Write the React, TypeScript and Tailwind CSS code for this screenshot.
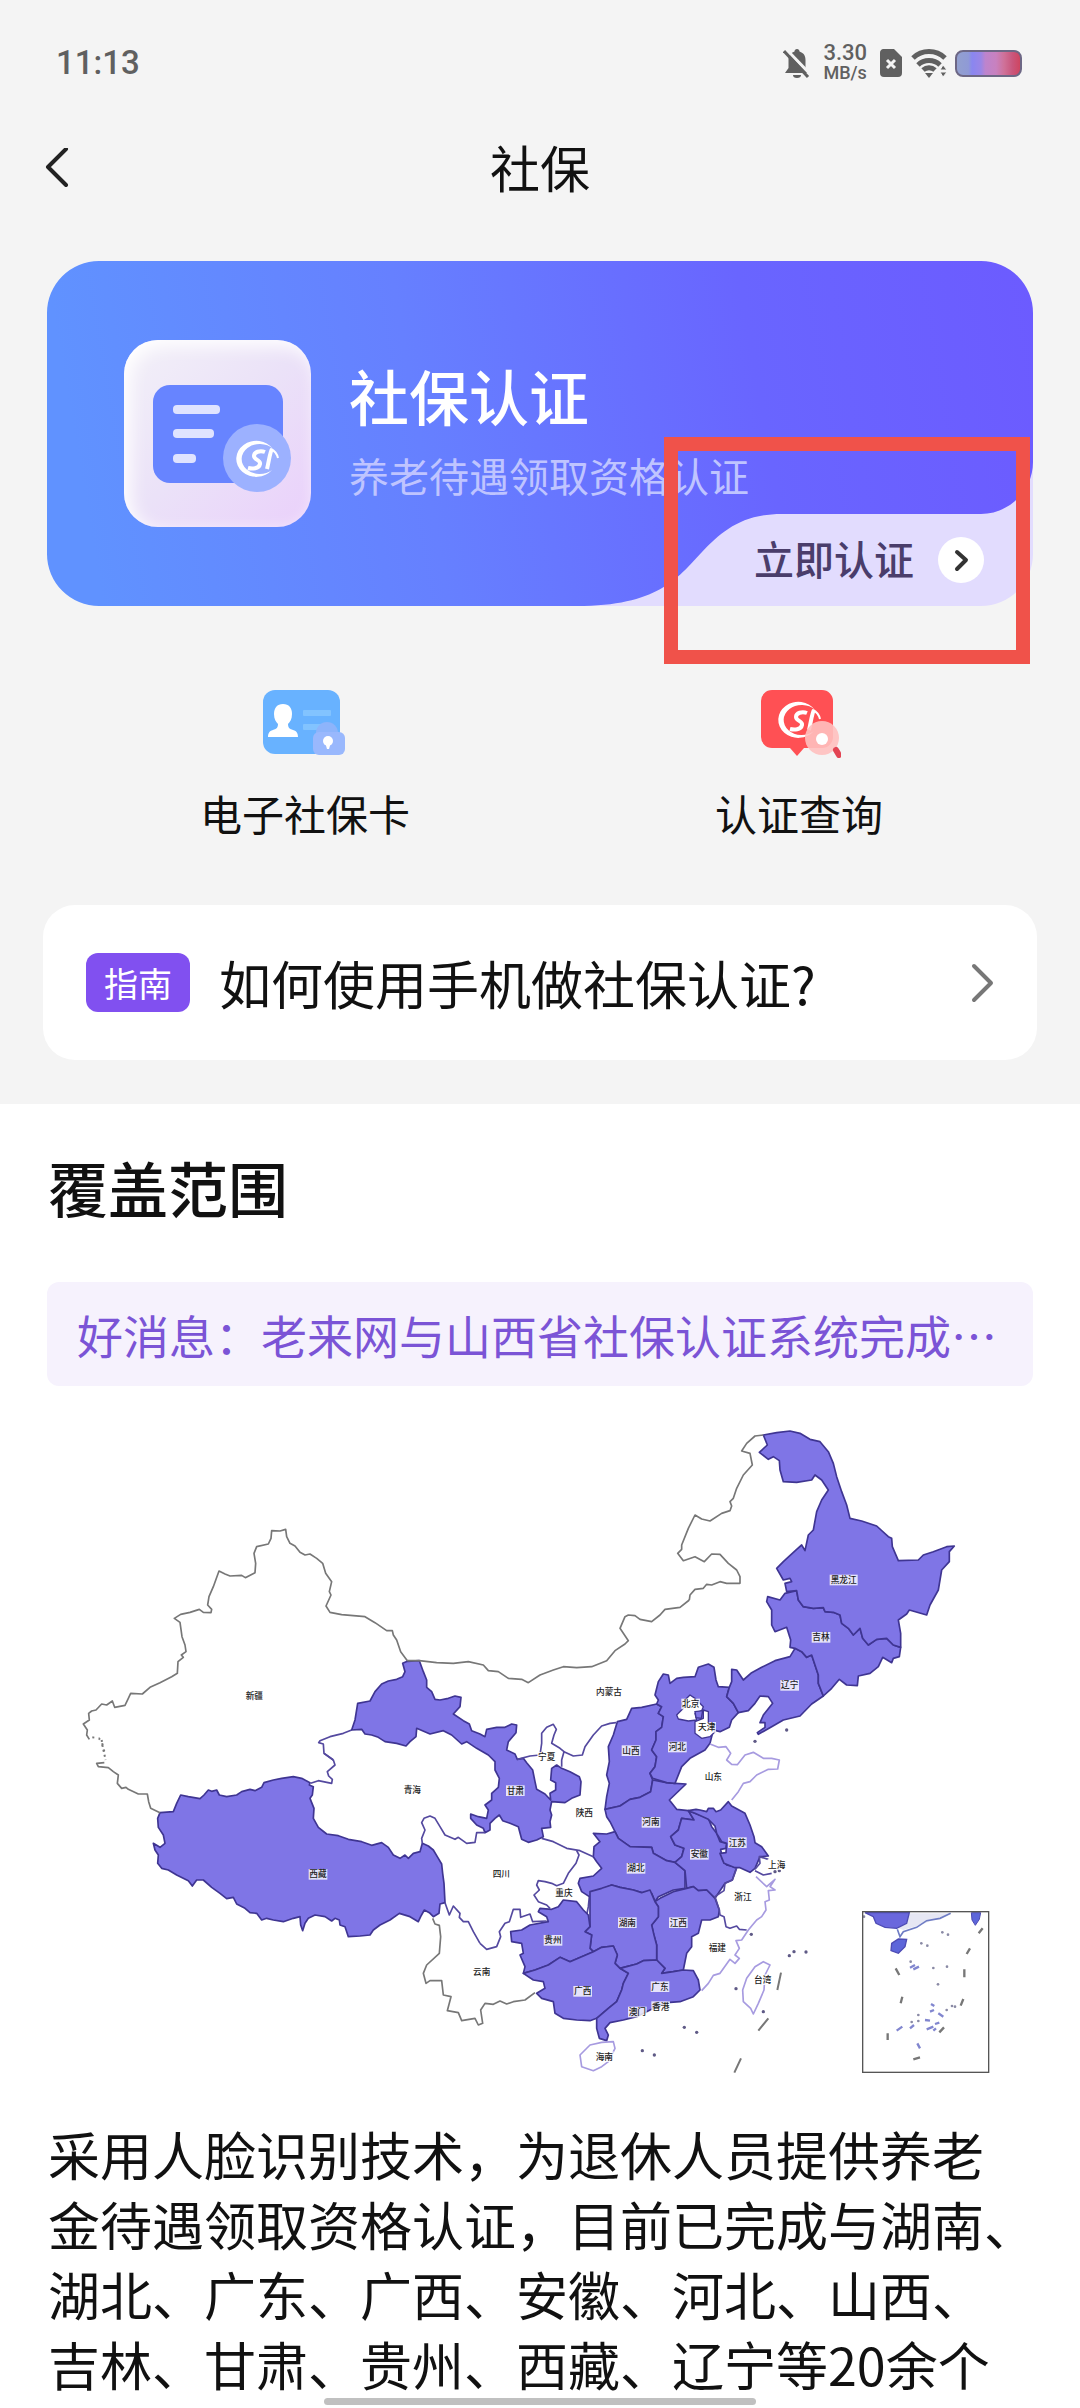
const PURPLE = "#7f75e6";
const BORDER = "#3f3592";
const COAST = "#a79be0";

// map units: 3 per pixel, each tile has its own origin
const tiles: { at: string; fills?: string[]; holes?: string[]; borders?: string[]; outer?: string[]; coast?: string[] }[] = [
  {
    at: "translate(0 0)",
    borders: ["M875,930 L850,940 810,950 780,962 776,968 790,972 792,1000 820,1020"],
    outer: [
      "M88,958 L80,945 82,930 70,912 88,900 86,880 95,873 108,870 125,852 140,855 157,843 164,862 195,856 205,835 212,820 247,822 270,802 300,788 335,770 352,760 354,725 370,712 364,705 378,695 375,675 366,650 360,607 343,595 362,583 390,577 418,568 430,577 453,578 455,568 443,555 447,530 460,500 477,453 495,462 510,468 545,466 556,473 585,458 587,430 582,400 590,380 625,372 633,355 635,332 660,333 677,328 680,350 690,370 705,378 720,397 735,405 750,402 770,415 788,430 797,460 815,485 808,515 813,525 798,558 810,577 845,584 915,590 945,608 980,632 997,632 1000,645 1010,660 1022,695 1042,722",
    ],
  },
  {
    at: "translate(0 960)",
    fills: [
      "M300,218 L340,215 350,190 362,165 385,170 420,176 432,165 445,150 455,154 470,150 478,165 500,170 530,165 545,155 570,148 585,152 605,142 612,128 640,120 665,115 700,110 725,115 750,128 748,135 760,140 757,165 750,175 762,205 760,235 775,262 800,282 835,287 865,298 905,305 935,316 965,308 985,322 1000,345 1020,355 1035,345 1045,355 1060,340 1080,335 1087,310 1105,318 1120,330 1135,355 1145,372 1148,400 1152,430 1155,488 1140,492 1137,520 1120,530 1108,518 1093,510 1082,530 1075,545 1050,530 1018,520 990,540 960,555 940,570 930,585 900,588 865,590 855,560 840,555 838,540 825,535 815,543 795,530 765,525 745,535 735,550 728,572 722,555 720,530 700,535 670,545 640,540 620,535 605,540 590,520 570,518 555,505 530,492 520,472 500,476 480,460 455,442 430,420 410,420 397,438 385,422 350,405 325,390 305,385 293,370 295,345 285,330 280,310 300,322 315,310 310,285 295,262 293,235 Z",
    ],
    borders: [
      "M820,60 L825,75 802,95 806,108 817,118 815,130 775,122 752,130",
      "M792,40 L795,42 820,60",
      "M1155,488 L1168,525 1180,498 1200,520 1198,532 1210,545 1225,545 1240,575 1260,610",
    ],
    outer: [
      "M133,68 L110,70 115,80 145,83 160,95 175,105 172,130 185,145 198,142 205,148 235,162 262,162 266,185 272,205 300,218",
      "M1118,535 L1125,552 1138,556 1142,590 1138,640 1100,675 1090,700 1098,730 1110,722 1145,722 1150,765 1173,770 1162,812 1195,818 1205,842 1245,835 1255,855 1268,850 1262,810 1275,790 1300,793 1320,783 1340,792 1360,785 1395,780 1425,758",
    ],
  },
  {
    at: "translate(960 540)",
    fills: [
      "M-85,390 L-75,360 -67,310 -30,303 -15,275 5,252 25,243 50,238 68,230 75,215 68,190 82,184 118,182 130,215 140,240 140,262 155,275 165,298 180,300 205,295 225,288 243,292 240,320 220,342 250,362 268,372 275,392 300,402 315,410 320,388 350,382 375,382 395,372 410,375 408,398 385,425 380,450 405,462 412,478 430,475 440,488 458,510 465,545 470,568 495,582 512,600 510,580 527,570 527,548 512,540 515,505 530,495 545,505 570,515 598,530 603,545 600,585 575,595 555,608 515,605 510,630 515,645 510,665 512,682 485,685 490,710 470,720 445,727 425,718 415,680 390,670 368,662 358,645 345,655 330,670 330,690 315,698 310,685 290,675 272,655 272,642 295,650 320,655 325,630 315,615 335,600 335,580 355,562 358,535 345,510 345,485 325,465 290,445 260,425 245,432 215,405 190,392 150,402 110,385 108,410 90,425 78,438 50,430 15,425 -5,412 -25,405 -45,402 -55,388 Z",
      "M675,628 L680,590 688,550 680,525 688,485 685,440 700,405 712,365 740,358 755,325 785,322 830,312 845,320 835,340 850,350 845,382 828,395 828,420 815,450 830,470 825,500 810,520 818,540 812,575 780,592 750,598 720,618 Z",
      "M675,628 L720,618 750,598 780,592 812,575 818,540 860,548 885,550 918,552 868,600 890,628 925,632 942,660 905,655 895,690 872,710 885,735 912,745 905,770 885,787 860,782 820,760 815,742 750,740 715,715 705,695 690,665 680,650 Z",
      "M705,695 L715,715 750,740 815,742 820,760 860,782 885,787 915,812 915,865 880,870 835,890 825,905 815,880 785,878 760,870 720,862 695,855 665,868 650,885 628,890 605,875 595,850 600,835 640,828 665,805 650,785 640,770 642,740 660,725 640,700 680,702 Z",
    ],
    borders: [
      "M127,730 L125,715 135,690 125,668 132,655 150,648 165,655 180,680 195,705 225,718 235,712 260,730 285,727 290,698 315,698",
      "M412,478 L450,468 480,465 485,430 485,400 500,382 520,373 529,388 522,405 515,430 540,445 552,455 545,480 545,500",
      "M552,455 L580,468 607,465 615,440 640,405 665,378 690,370 708,368",
      "M485,715 L520,725 560,745 600,752 640,770",
      "M590,752 L597,765 588,790 565,820 550,850 530,857 515,850 495,845 475,842 470,855 478,870 462,885 475,905 500,915 510,925",
      "M628,890 L625,920 620,945",
    ],
    outer: [
      "M82,182 L118,182 170,188 220,190 265,185 310,195 325,212 355,215 385,235 425,238 445,248 480,225 520,210 550,200 590,203 635,200 680,182 705,152 735,132 745,122 720,85 735,50 745,45 765,47 780,58 815,65 840,45 855,28 900,22 928,0",
    ],
  },
  {
    at: "translate(1740 0)",
    fills: [
      "M50,852 L55,840 45,825 55,785 70,762 85,765 90,790 110,775 130,772 165,770 175,742 205,732 222,742 228,780 235,800 268,802 260,830 280,850 295,878 275,900 268,922 240,935 220,930 210,970 195,990 150,1015 125,1040 105,1090 80,1088 38,1075 30,1060 45,1040 50,1010 35,990 48,960 48,935 65,922 70,890 55,880 65,860 Z",
      "M268,802 L275,785 275,748 290,750 310,780 335,758 365,742 405,722 450,710 465,685 485,695 500,712 515,705 525,735 535,765 535,790 550,828 515,852 480,888 430,900 395,920 355,943 352,938 375,922 375,908 360,908 370,885 398,850 385,830 360,828 345,850 325,872 295,878 280,850 260,830 Z",
      "M465,685 L450,682 452,660 440,622 405,635 395,615 395,570 380,545 383,530 420,540 435,520 470,512 475,540 490,560 520,565 550,563 555,575 580,577 600,585 605,610 625,625 640,645 660,625 668,655 685,675 710,658 740,655 760,675 782,682 778,710 760,715 755,728 728,712 715,740 690,760 655,768 652,797 620,795 598,778 575,805 550,828 535,790 535,765 525,735 515,705 500,712 485,695 Z",
      "M370,45 L410,38 450,33 480,40 510,58 540,65 565,95 580,130 590,170 605,215 620,255 630,295 665,303 710,318 745,350 755,355 757,380 775,422 835,420 850,405 880,395 920,380 943,378 928,395 928,425 905,450 895,510 870,555 860,585 808,570 800,582 775,600 782,640 782,682 760,675 740,655 710,658 685,675 668,655 660,625 640,645 625,625 605,610 600,585 580,577 555,575 550,563 520,565 490,560 475,540 470,512 440,515 435,490 455,485 450,475 430,480 410,445 430,425 470,388 485,375 495,392 505,345 520,330 530,275 545,240 565,210 545,180 525,165 515,180 470,187 430,185 420,150 418,122 400,110 385,118 358,97 382,75 Z",
    ],
    holes: [
      "M110,885 L130,865 125,850 150,825 165,835 190,860 185,872 165,880 170,900 145,903 115,897 Z",
      "M165,905 L190,895 190,870 205,875 205,910 225,935 210,950 185,955 165,940 Z",
    ],
    outer: [
      "M148,540 L150,525 165,508 190,505 200,493 215,495 240,485 260,490 300,490 300,470 290,450 265,430 240,403 215,402 193,425 165,410 130,422 113,400 125,388 125,375 145,325 165,285 185,297 210,303 245,280 270,272 275,258 270,245 280,235 290,205 310,165 337,135 330,100 305,93 320,70 345,48 370,45",
    ],
  },
  {
    at: "translate(1260 1200)",
    fills: [
      "M625,-28 L642,0 605,-5 595,30 572,50 585,75 612,85 605,110 585,127 615,152 620,205 640,200 655,212 680,210 705,235 735,190 757,180 770,142 740,135 728,120 722,88 738,85 740,70 720,65 710,40 695,20 685,-5 645,-20 Z",
      "M525,245 L540,235 580,215 620,205 640,200 655,212 680,210 705,235 718,270 715,290 690,300 665,300 655,340 635,350 635,380 620,400 610,450 580,455 545,460 555,445 530,420 530,375 520,340 515,315 535,290 535,260 Z",
      "M330,215 L365,205 395,195 420,202 460,210 485,218 510,210 525,245 535,260 535,290 515,315 522,345 530,375 530,420 490,422 470,432 440,440 420,445 405,430 412,405 400,378 365,382 340,395 330,385 335,345 315,335 330,320 330,270 Z",
      "M130,460 L135,440 120,405 130,400 125,370 95,365 92,335 125,330 150,315 205,305 200,290 175,275 180,265 215,268 235,260 250,240 290,245 310,270 325,285 330,320 315,335 335,345 330,385 340,395 305,410 270,425 240,412 205,435 165,450 Z",
      "M130,460 L165,450 205,435 240,412 270,425 305,410 340,395 365,382 400,378 412,405 405,430 420,445 445,460 430,490 425,510 410,545 385,565 350,595 330,602 290,600 250,595 225,580 220,545 185,535 170,520 195,505 190,485 160,480 Z",
      "M420,445 L440,440 470,432 490,422 530,420 555,445 545,460 580,455 610,450 640,452 655,480 660,510 640,530 600,545 560,548 510,570 470,590 430,600 390,608 375,625 385,645 380,662 358,655 350,625 350,595 385,565 410,545 425,510 430,490 445,460 Z",
    ],
    borders: ["M0,370 L20,388 50,380 62,350 58,335 75,310 88,305 100,268 120,268 122,292 150,282 158,305 200,303"],
    coast: [
      "M365,667 L400,665 405,685 385,725 365,740 340,752 305,740 300,705 330,675 Z",
      "M850,425 L870,435 855,465 852,510 835,550 820,582 812,565 790,545 788,510 800,475 825,440 Z",
    ],
  },
  {
    at: "translate(1920 840)",
    fills: [
      "M-35,332 L-12,328 0,330 20,335 25,325 40,325 48,335 62,330 85,305 95,318 135,340 150,375 162,410 165,428 185,440 205,468 180,470 165,505 150,517 120,503 105,503 72,490 60,460 78,458 80,430 65,425 50,400 45,378 25,358 -15,340 Z",
    ],
    borders: [
      "M110,505 L97,540 75,550 72,572 45,590 58,630 60,645 72,650 78,680 90,685 110,678 118,688 140,690",
      "M165,508 L180,490 178,470 205,478",
      "M165,512 L190,525 215,520",
    ],
    coast: [
      "M30,132 L55,142 78,140 92,160 80,180 95,193 112,194 135,165 160,157 190,175 215,175 238,180 233,207 205,208 170,225 150,245 130,250 115,275 95,300",
      "M168,530 L200,560 225,538 210,560 225,570 205,572 208,600 195,605 198,630 185,650 170,660 145,690 125,720 108,722 118,745 105,765 118,775 105,790 90,778 60,820 40,826 25,850 5,872",
    ],
  },
];

const labels: [string, number, number][] = [
  ["新疆", 583, 829], ["青海", 1057, 1110], ["西藏", 774, 1363], ["四川", 1324, 1362], ["甘肃", 1366, 1112],
  ["宁夏", 1460, 1012], ["陕西", 1573, 1178], ["内蒙古", 1647, 816], ["山西", 1713, 992], ["河北", 1852, 981],
  ["北京", 1892, 852], ["天津", 1940, 922], ["山东", 1960, 1070], ["河南", 1773, 1207], ["湖北", 1728, 1345],
  ["安徽", 1918, 1303], ["重庆", 1512, 1418], ["湖南", 1702, 1508], ["江西", 1855, 1508], ["贵州", 1479, 1561],
  ["云南", 1265, 1657], ["广西", 1568, 1714], ["广东", 1800, 1700], ["澳门", 1732, 1776], ["香港", 1802, 1760],
  ["海南", 1633, 1910], ["福建", 1972, 1584], ["浙江", 2049, 1430], ["江苏", 2032, 1268], ["上海", 2150, 1334],
  ["台湾", 2108, 1679], ["黑龙江", 2351, 480], ["吉林", 2283, 652], ["辽宁", 2189, 796],
];

const isles = [
  [2188, 1607], [2202, 1595], [2238, 1596], [2028, 1706], [1873, 1822], [1910, 1837], [1747, 1892], [1783, 1905],
  [2110, 1775], [2085, 964], [2180, 930], [2074, 1543], [2145, 1355], [2158, 1352],
];

const reefs = [
  [727, 697], [744, 704], [664, 730], [682, 737], [700, 804], [741, 800], [714, 853], [632, 785], [655, 945],
  [655, 963], [740, 930], [756, 918], [765, 920], [635, 966], [492, 650],
];

function CoverageMap() {
  return (
    <svg viewBox="0 0 2880 2010" className="block w-full h-auto" role="img" aria-label="覆盖范围">
      {tiles.map((t) => (
        <g key={t.at} transform={t.at} strokeLinejoin="round" fill="none">
          {t.fills?.map((d) => <path key={d} d={d} fill={PURPLE} stroke={BORDER} strokeWidth="5" />)}
          {t.holes?.map((d) => <path key={d} d={d} fill="#fff" stroke={BORDER} strokeWidth="4" />)}
          {t.borders?.map((d) => <path key={d} d={d} stroke="#54499f" strokeWidth="5" />)}
          {t.outer?.map((d) => <path key={d} d={d} stroke="#777" strokeWidth="5" />)}
          {t.coast?.map((d) => <path key={d} d={d} stroke={COAST} strokeWidth="5" />)}
        </g>
      ))}
      <path d="M97,952 L117,955 126,968 131,988 135,1000" stroke="#777" strokeWidth="6" strokeDasharray="6 13" fill="none" />
      <path d="M125,960 L127,975 132,998 137,1020" stroke="#777" strokeWidth="6" strokeDasharray="6 9" fill="none" />
      <path d="M1905,875 L1928,872 1924,895 1908,893 Z" fill={PURPLE} stroke={BORDER} strokeWidth="4" />
      {isles.map(([x, y]) => <circle key={`${x}-${y}`} cx={x} cy={y} r="5" fill="#5f5a86" />)}
      <path d="M2163,1658 L2152,1710 M2125,1795 L2095,1832 M2043,1915 L2023,1958" stroke="#777" strokeWidth="6" />

      {labels.map(([name, x, y]) => (
        <g key={name}>
          <rect x={x - name.length * 14} y={y - 16} width={name.length * 28} height="32" fill="#fff" fillOpacity="0.8" />
          <text x={x} y={y + 9} fontSize="26" fontWeight="500" textAnchor="middle" fill="#222">{name}</text>
        </g>
      ))}

      {/* south sea inset */}
      <g transform="translate(1920 840)" fill="none">
        <path d="M630,640 H750 L700,660 660,675 610,690 595,685 Z" fill="#e6e7f3" />
        <path d="M495,638 L520,650 528,670 555,682 590,685 620,670 628,638 Z" fill="#6a67dd" stroke="#4d4bb4" strokeWidth="4" />
        <path d="M592,688 L600,710 610,695 650,682 680,662 720,655 752,640" stroke="#6e7cc4" strokeWidth="5" />
        <path d="M575,730 L595,717 620,718 615,740 595,760 573,752 Z" fill="#5d66da" stroke="#4d4bb4" strokeWidth="4" />
        <path d="M814,638 H842 L838,658 826,676 816,660 Z" fill="#5d66da" stroke="#4d4bb4" strokeWidth="3" />
        <path
          d="M848,685 L836,700 M810,745 L800,762 M793,808 V832 M587,805 L598,825 M607,890 L602,910 M790,897 L782,917 M563,1000 V1020 M640,1078 L660,1072 M732,982 L718,997"
          stroke="#777" strokeWidth="7"
        />
        <path
          d="M630,803 L645,795 M640,808 L657,800 M693,912 L703,918 M690,935 L702,930 M715,940 L730,950 M675,960 L690,962 M590,992 L607,980 M630,985 L642,975 M680,988 L700,980 M700,992 L708,985 M652,1030 L660,1045 M705,972 L718,968"
          stroke="#8186cf" strokeWidth="7"
        />
        {reefs.map(([x, y]) => <circle key={`${x}-${y}`} cx={x} cy={y} r="4" fill="#8a8aa5" />)}
        <rect x="488" y="635" width="378" height="482" stroke="#555" strokeWidth="4" />
      </g>
    </svg>
  );
}

function SiMark() {
  return (
    <g fill="none" stroke="#fff">
      <path d="M37 8 A20 18 0 1 0 36 29 A18 15 0 1 1 37 8 Z" fill="#fff" stroke="none" />
      <path d="M29 11 C24 9 18 11 18 15 C18 19 25 19 24 23 C23 28 16 28 12 27" strokeWidth="4" />
      <path d="M36 8 C34 11 33 20 31 28" strokeWidth="4" />
      <path d="M35 8 C39 10 41 13 42 17" strokeWidth="2" />
    </g>
  );
}

function StatusBar() {
  return (
    <div className="flex h-[126px] items-center justify-between pl-14 pr-[58px] text-[#606060] font-[Roboto,sans-serif]">
      <div className="text-[33px] font-medium leading-10">11:13</div>
      <div className="flex items-center">
        <svg className="mr-3 h-8 w-7" viewBox="0 0 28 32">
          <path d="M14 2 c1.500 0 2.500 1 2.500 2.500 C21 6 22.500 9 22.500 13 V21 L26 26 H2 L5.500 21 V13 C5.500 9 7 6 11.500 4.500 C11.500 3 12.500 2 14 2 Z" fill="#606060" />
          <path d="M10 28 h8 a4 3 0 0 1 -8 0 Z" fill="#606060" />
          <path d="M3 2 L28 28" stroke="#f4f4f4" strokeWidth="3" />
          <path d="M1 4 L25 30" stroke="#606060" strokeWidth="3" />
        </svg>
        <div className="mr-3 flex flex-col items-center text-[18px] font-medium leading-5">
          <span className="text-[22px]">3.30</span>
          <span>MB/s</span>
        </div>
        <svg className="mr-2 h-8 w-6" viewBox="0 0 24 32">
          <path d="M4 2 H15 L23 10 V26 a4 4 0 0 1 -4 4 H5 a4 4 0 0 1 -4 -4 V6 a4 4 0 0 1 3 -4 Z" fill="#606060" />
          <path d="M8 13 L16 21 M16 13 L8 21" stroke="#f4f4f4" strokeWidth="3" />
        </svg>
        <svg className="mr-2 h-8 w-9" viewBox="0 0 36 32" fill="none" stroke="#606060" strokeWidth="5">
          <path d="M2 11 A23 23 0 0 1 34 11" />
          <path d="M7 18 A16 16 0 0 1 29 18" />
          <path d="M12 23 A9 9 0 0 1 24 23" />
          <path d="M14 26 h8 l-4 5 Z" fill="#606060" stroke="none" />
          <path d="M32 18 l4 5 h-7 Z M32 30 l4 -5 h-7 Z" fill="#606060" stroke="#f4f4f4" strokeWidth="1" />
        </svg>
        <div className="h-[27px] w-[67px] rounded-lg border-2 border-[#6d6785] bg-[linear-gradient(90deg,#93a0cf_0,#8f9ad6_18%,#8a86f0_24%,#9a86e6_38%,#bd84cd_45%,#c881bf_62%,#cf7198_75%,#c9567c_88%,#cf4560_100%)]" />
      </div>
    </div>
  );
}

function AuthCard() {
  return (
    <section className="relative mx-[47px] mt-[47px] flex h-[345px] items-center gap-[38px] pl-[77px]">
      <svg className="absolute inset-0 h-full w-full" viewBox="0 0 986 345" preserveAspectRatio="none">
        <defs>
          <linearGradient id="card" x1="0" y1="0.060" x2="1" y2="0">
            <stop offset="0" stopColor="#6092ff" />
            <stop offset="0.350" stopColor="#6680ff" />
            <stop offset="0.700" stopColor="#6965ff" />
            <stop offset="1" stopColor="#6c5bff" />
          </linearGradient>
        </defs>
        <path d="M500,345 V200 H986 V293 A52 52 0 0 1 934,345 Z" fill="#e2dcfe" />
        <path d="M52,0 H934 A52 52 0 0 1 986,52 V201 C986,230 962,253 934,253 H735 C695,253 675,270 655,291 C630,318 610,345 530,345 H52 A52 52 0 0 1 0,293 V52 A52 52 0 0 1 52,0 Z" fill="url(#card)" />
      </svg>

      <div className="relative h-[187px] w-[187px] shrink-0 rounded-[34px] bg-linear-to-br from-[#f3f1f8] via-[#ebe2f8] to-[#ead0fb] shadow-[inset_6px_6px_18px_#ffffff]">
        <svg className="h-[187px] w-[187px]" viewBox="0 0 187 187">
          <rect x="29" y="45" width="130" height="98" rx="17" fill="#6784ff" />
          <g fill="#dfe3ff">
            <rect x="49" y="65" width="47" height="9" rx="4" />
            <rect x="49" y="89" width="41" height="9" rx="4" />
            <rect x="49" y="114" width="23" height="9" rx="4" />
          </g>
          <circle cx="133" cy="118" r="34" fill="#9cb1ff" />
          <g transform="translate(112 101)">
            <SiMark />
          </g>
        </svg>
      </div>

      <div className="relative pb-2">
        <h2 className="text-[60px] font-medium leading-[80px] text-white">社保认证</h2>
        <p className="mt-[10px] text-[40px] leading-[60px] text-[#bfc4ff]">养老待遇领取资格认证</p>
      </div>

      <button className="absolute bottom-0 right-0 flex h-[92px] items-center gap-6 pr-[49px] text-[40px] font-medium text-[#4a3d6b]">
        <span className="pb-1 leading-[60px]">立即认证</span>
        <span className="flex h-[46px] w-[46px] items-center justify-center rounded-full bg-white">
          <svg className="h-6 w-6" viewBox="0 0 24 24" fill="none" stroke="#333" strokeWidth="4" strokeLinecap="round" strokeLinejoin="round">
            <path d="M8 4 L17 12 L8 21" />
          </svg>
        </span>
      </button>

      <div className="pointer-events-none absolute right-[3px] top-44 h-[227px] w-[366px] border-14 border-[#f0524a]" />
    </section>
  );
}

function CardIcon() {
  return (
    <svg className="h-[68px] w-[84px]" viewBox="3 0 84 68">
      <rect x="3" y="0" width="77" height="64" rx="12" fill="#68b2ff" />
      <path d="M23 14 c6 0 9 4 9 10 c0 5 -2 8 -4 10 c0 4 2 5 5 6 c4 1 5 4 5 7 H8 c0 -3 1 -6 5 -7 c3 -1 5 -2 5 -6 c-2 -2 -4 -5 -4 -10 c0 -6 3 -10 9 -10 Z" fill="#fff" />
      <rect x="43" y="20" width="28" height="6" rx="1" fill="#82c3ff" />
      <rect x="43" y="34" width="20" height="6" rx="1" fill="#82c3ff" />
      <path d="M56 44 V43 a11 11 0 0 1 22 0 V44" fill="#8db4fb" />
      <rect x="53" y="42" width="32" height="23" rx="6" fill="#99b8fd" />
      <circle cx="68" cy="51" r="5" fill="#fff" />
      <path d="M65 52 h6 l-2 7 h-2 Z" fill="#fff" />
    </svg>
  );
}

function QueryIcon() {
  return (
    <svg className="h-[68px] w-[84px]" viewBox="0 0 84 68">
      <path d="M15 0 H65 a11 11 0 0 1 11 11 V47 a11 11 0 0 1 -11 11 H47 L40 66 L33 58 H15 a11 11 0 0 1 -11 -11 V11 a11 11 0 0 1 11 -11 Z" fill="#ff5054" />
      <g transform="translate(21 12)">
        <SiMark />
      </g>
      <circle cx="65" cy="48" r="17" fill="#ffc0bf" fillOpacity="0.900" />
      <circle cx="65" cy="49" r="6" fill="#fff" />
      <path d="M79 60 L82 65" stroke="#e34453" strokeWidth="6" strokeLinecap="round" />
    </svg>
  );
}

const actions = [
  { label: "电子社保卡", icon: <CardIcon /> },
  { label: "认证查询", icon: <QueryIcon /> },
];

export default function App() {
  return (
    <div className="bg-white text-[#111] font-['Noto_Sans_CJK_SC',sans-serif]">
      <div className="bg-[#f4f4f4] pb-11">
        <StatusBar />

        <header className="grid h-[88px] grid-cols-[1fr_auto_1fr] items-center px-11">
          <button aria-label="返回" className="justify-self-start">
            <svg className="h-11 w-7" viewBox="0 0 28 44" fill="none" stroke="#222" strokeWidth="4" strokeLinecap="round" strokeLinejoin="round">
              <path d="M22 1 L4 19 L22 37" />
            </svg>
          </button>
          <h1 className="pb-2 text-[50px] leading-[72px]">社保</h1>
        </header>

        <AuthCard />

        <nav className="mt-[84px] grid grid-cols-2 pl-[58px] pr-[34px]">
          {actions.map((a) => (
            <button key={a.label} className="flex flex-col items-center gap-[30px] pb-0.5">
              {a.icon}
              <span className="text-[42px] leading-[50px]">{a.label}</span>
            </button>
          ))}
        </nav>

        <a href="#guide" className="mx-[43px] mt-[65px] flex h-[155px] items-center rounded-[32px] bg-white pl-[43px] pr-[42px]">
          <span className="rounded-xl bg-[#8150f0] px-[18px] text-[34px] leading-[59px] text-white">指南</span>
          <span className="ml-[29px] flex-1 text-[52px] leading-[72px]">如何使用手机做社保认证?</span>
          <svg className="h-11 w-7" viewBox="0 0 28 44" fill="none" stroke="#777" strokeWidth="4" strokeLinecap="round" strokeLinejoin="round">
            <path d="M7 5 L24 22 L7 39" />
          </svg>
        </a>
      </div>

      <main className="pb-[9px] pt-12">
        <h2 className="mx-12 text-[60px] font-medium leading-[70px]">覆盖范围</h2>
        <p className="mx-[47px] mt-[60px] truncate rounded-xl bg-[#f6f2fd] px-[30px] text-[46px] leading-[104px] text-[#7b54d6]">
          好消息：老来网与山西省社保认证系统完成…
        </p>
        <div className="mt-[34px] px-[60px]">
          <CoverageMap />
        </div>
        <p className="ml-12 mt-[29px] text-[52px] leading-[70px]">
          采用人脸识别技术，为退休人员提供养老
          <br />
          金待遇领取资格认证，目前已完成与湖南、
          <br />
          湖北、广东、广西、安徽、河北、山西、
          <br />
          吉林、甘肃、贵州、西藏、辽宁等20余个
        </p>
      </main>

      <div className="fixed bottom-[3px] left-1/2 h-[7px] w-2/5 -translate-x-1/2 rounded-full bg-[#c0c0c0]" />
    </div>
  );
}
